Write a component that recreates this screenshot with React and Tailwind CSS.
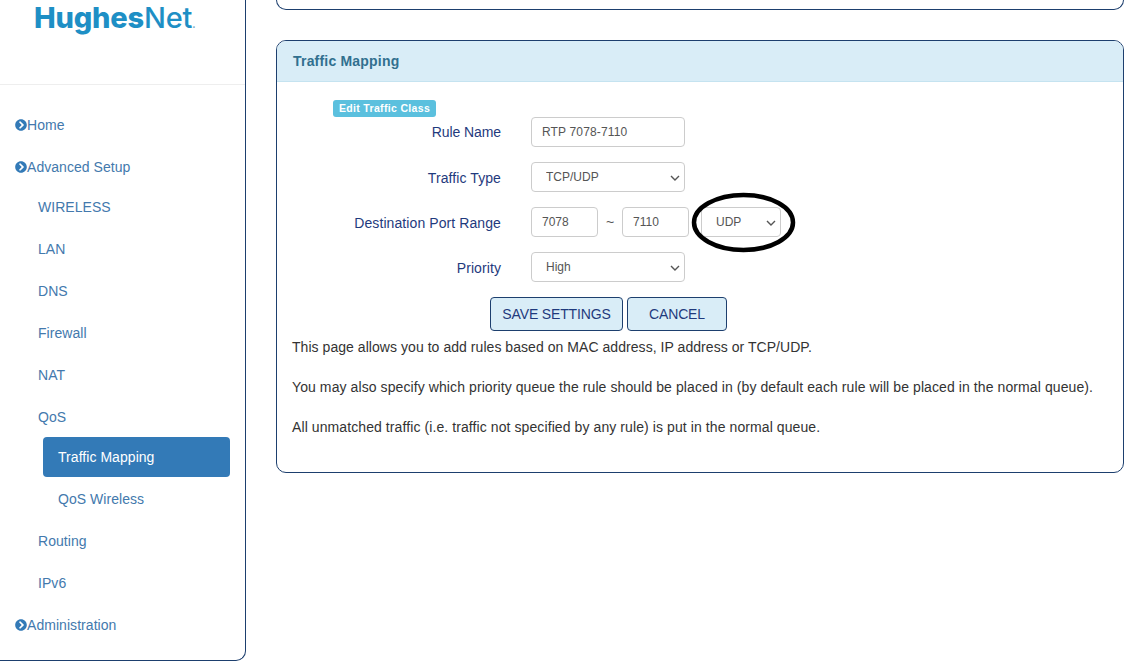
import React from "react";
import { FaChevronCircleRight } from "react-icons/fa";

const linkText = "text-[14px] leading-[20px] tracking-[0.05px] text-[#4379ad]";

function TopItem({ children }) {
  return (
    <li className={`flex items-center py-[10px] pl-[15px] ${linkText}`}>
      <FaChevronCircleRight className="w-[12px] h-[12px] text-[#337ab7] shrink-0" />
      <span>{children}</span>
    </li>
  );
}

function SubItem({ children }) {
  return <li className={`py-[10px] pl-[15px] ${linkText}`}>{children}</li>;
}

function Row({ label, nudge, children }) {
  return (
    <div className="flex items-center h-[30px] gap-[30px]">
      <label
        className={`w-[209px] text-right text-[14px] leading-[20px] text-[#1f3a7d] ${nudge ? "pt-[2px] tracking-[0.09px]" : "tracking-[-0.1px]"}`}
      >
        {label}
      </label>
      {children}
    </div>
  );
}

const field =
  "h-[30px] rounded-[4px] border border-[#cccccc] bg-white text-[12px] text-[#555555]";

function Select({ value, width }) {
  return (
    <div className={`relative ${width}`}>
      <select defaultValue={value} className={`${field} w-full appearance-none pl-[14px] pr-[20px]`}>
        <option>{value}</option>
      </select>
      <svg
        className="absolute right-[5px] top-[13px] pointer-events-none"
        width="10"
        height="6"
        viewBox="0 0 10 6"
      >
        <path d="M1 1 L5 5 L9 1" fill="none" stroke="#555555" strokeWidth="1.4" />
      </svg>
    </div>
  );
}

export default function App() {
  return (
    <div className="relative flex items-start h-[666px] w-[1132px] overflow-hidden bg-white font-['Liberation_Sans',Arial,sans-serif]">
      <aside className="w-[246px] h-[661px] shrink-0 border-r border-b border-[#1d3f6e] rounded-br-[10px]">
        <div className="h-[84px] pl-[34px]">
          <div className="text-[29px] leading-[36px] tracking-[-0.2px] text-[#1e8fc5] font-['Inter',sans-serif] flex items-baseline">
            <span className="font-extrabold">Hughes</span>
            <span className="font-medium">Net</span>
            <span className="text-[10px] text-[#7aa9c4] font-bold">.</span>
          </div>
        </div>
        <div className="h-px bg-[#eeeeee]" />
        <ul className="mt-[20px] flex flex-col">
          <TopItem>Home</TopItem>
          <div className="mt-[2px]">
            <TopItem>Advanced Setup</TopItem>
          </div>
          <ul className="pl-[23px] flex flex-col gap-[2px]">
            <SubItem>WIRELESS</SubItem>
            <SubItem>LAN</SubItem>
            <SubItem>DNS</SubItem>
            <SubItem>Firewall</SubItem>
            <SubItem>NAT</SubItem>
            <SubItem>QoS</SubItem>
          </ul>
          <ul className="ml-[43px] mr-[15px] flex flex-col gap-[2px]">
            <li className="py-[10px] pl-[15px] text-[14px] leading-[20px] tracking-[0.05px] text-white bg-[#337ab7] rounded-[4px]">
              Traffic Mapping
            </li>
            <SubItem>QoS Wireless</SubItem>
          </ul>
          <ul className="mt-[2px] pl-[23px] flex flex-col gap-[2px]">
            <SubItem>Routing</SubItem>
            <SubItem>IPv6</SubItem>
          </ul>
          <div className="mt-[2px]">
            <TopItem>Administration</TopItem>
          </div>
        </ul>
      </aside>

      <main className="ml-[30px] w-[848px] shrink-0">
        <div className="h-[10px] border-x border-b border-[#1d3f6e] rounded-b-[10px]" />
        <section className="mt-[30px] border border-[#1d3f6e] rounded-[10px] overflow-hidden">
          <h2 className="h-[41px] flex items-center pl-[16px] pr-[15px] bg-[#d9edf7] border-b border-[#c5e3f0] text-[14px] tracking-[0.2px] font-bold text-[#31708f]">
            Traffic Mapping
          </h2>
          <div className="px-[15px] pt-[18px] pb-[15px]">
            <span className="block w-[103px] h-[17px] ml-[41px] rounded-[3px] bg-[#5bc0de] text-center text-[10.5px] leading-[17px] tracking-[0.33px] font-bold text-white">
              Edit Traffic Class
            </span>
            <div className="flex flex-col gap-[15px]">
              <Row label="Rule Name">
                <input readOnly defaultValue="RTP 7078-7110" className={`${field} px-[10px] tracking-[0.15px] w-[154px]`} />
              </Row>
              <Row label="Traffic Type" nudge>
                <Select value="TCP/UDP" width="w-[154px]" />
              </Row>
              <Row label="Destination Port Range" nudge>
                <div className="flex items-center">
                  <input readOnly defaultValue="7078" className={`${field} px-[10px] w-[67px]`} />
                  <span className="w-[24px] text-center text-[14px] text-[#555555]">~</span>
                  <input readOnly defaultValue="7110" className={`${field} px-[10px] w-[67px]`} />
                  <Select value="UDP" width="w-[80px] ml-[12px]" />
                </div>
              </Row>
              <Row label="Priority" nudge>
                <Select value="High" width="w-[154px]" />
              </Row>
            </div>
            <div className="mt-[15px] ml-[198px] flex gap-[4px]">
              <button className="w-[133px] h-[34px] rounded-[4px] border border-[#1d3f6e] bg-[#d9edf7] text-[14px] tracking-[-0.15px] text-[#1f3a7d]">
                SAVE SETTINGS
              </button>
              <button className="w-[100px] h-[34px] rounded-[4px] border border-[#1d3f6e] bg-[#d9edf7] text-[14px] tracking-[-0.15px] text-[#1f3a7d]">
                CANCEL
              </button>
            </div>
            <div className="mt-[6px] text-[14px] leading-[20px] text-[#333333]">
              <p className="mb-[20px] tracking-[0.05px]">This page allows you to add rules based on MAC address, IP address or TCP/UDP.</p>
              <p className="mb-[20px] tracking-[0.09px]">
                You may also specify which priority queue the rule should be placed in (by default each rule will be placed in the normal queue).
              </p>
              <p className="mb-[20px] tracking-[0.09px]">All unmatched traffic (i.e. traffic not specified by any rule) is put in the normal queue.</p>
            </div>
          </div>
        </section>
      </main>

      <svg className="absolute left-[688px] top-[190px] pointer-events-none" width="110" height="64" viewBox="0 0 110 64">
        <ellipse cx="55.5" cy="32.5" rx="49.5" ry="27.5" fill="none" stroke="#000000" strokeWidth="4.5" />
      </svg>
    </div>
  );
}
